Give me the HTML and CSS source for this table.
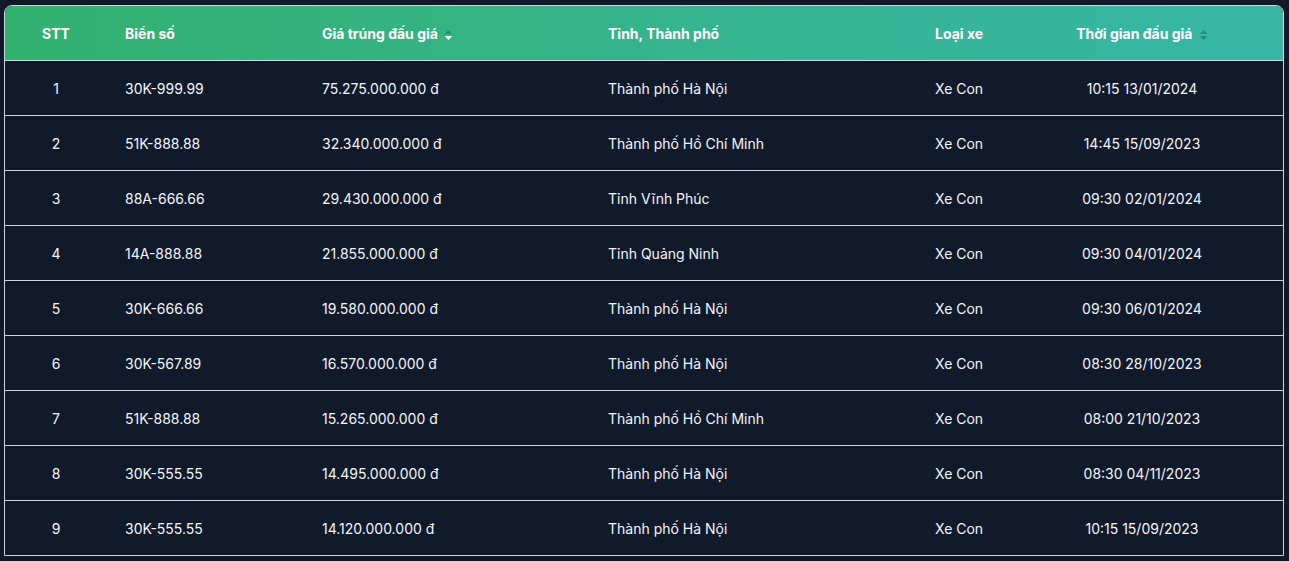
FILE: index.html
```html
<!DOCTYPE html>
<html lang="vi">

<head>
    <meta charset="UTF-8">
    <title>Biển số trúng đấu giá</title>
    <link rel="stylesheet" href="styles.css">
</head>

<body>
    <div class="wrap">
        <table class="plates">
            <colgroup>
                <col class="c-stt">
                <col class="c-plate">
                <col class="c-price">
                <col class="c-city">
                <col class="c-type">
                <col class="c-time">
            </colgroup>
            <thead>
                <tr>
                    <th class="center">STT</th>
                    <th>Biển số</th>
                    <th>Giá trúng đấu giá
                        <svg class="sort" width="9" height="12" viewBox="0 0 9 12">
                            <path d="M1 4.6 L4.5 1 L8 4.6 Q8.2 5 7.7 5 L1.3 5 Q0.8 5 1 4.6 Z" fill="#1f8a55" opacity="0.75"/>
                            <path d="M1 7.4 L4.5 11 L8 7.4 Q8.2 7 7.7 7 L1.3 7 Q0.8 7 1 7.4 Z" fill="#ffffff"/>
                        </svg>
                    </th>
                    <th>Tỉnh, Thành phố</th>
                    <th>Loại xe</th>
                    <th class="center">Thời gian đấu giá
                        <svg class="sort" width="9" height="12" viewBox="0 0 9 12">
                            <path d="M1 4.6 L4.5 1 L8 4.6 Q8.2 5 7.7 5 L1.3 5 Q0.8 5 1 4.6 Z" fill="#1e8a78" opacity="0.8"/>
                            <path d="M1 7.4 L4.5 11 L8 7.4 Q8.2 7 7.7 7 L1.3 7 Q0.8 7 1 7.4 Z" fill="#1e8a78" opacity="0.8"/>
                        </svg>
                    </th>
                </tr>
            </thead>
            <tbody id="rows"></tbody>
        </table>
    </div>

    <script>
        const rows = [
            ["30K-999.99", "75.275.000.000 đ", "Thành phố Hà Nội", "10:15 13/01/2024"],
            ["51K-888.88", "32.340.000.000 đ", "Thành phố Hồ Chí Minh", "14:45 15/09/2023"],
            ["88A-666.66", "29.430.000.000 đ", "Tỉnh Vĩnh Phúc", "09:30 02/01/2024"],
            ["14A-888.88", "21.855.000.000 đ", "Tỉnh Quảng Ninh", "09:30 04/01/2024"],
            ["30K-666.66", "19.580.000.000 đ", "Thành phố Hà Nội", "09:30 06/01/2024"],
            ["30K-567.89", "16.570.000.000 đ", "Thành phố Hà Nội", "08:30 28/10/2023"],
            ["51K-888.88", "15.265.000.000 đ", "Thành phố Hồ Chí Minh", "08:00 21/10/2023"],
            ["30K-555.55", "14.495.000.000 đ", "Thành phố Hà Nội", "08:30 04/11/2023"],
            ["30K-555.55", "14.120.000.000 đ", "Thành phố Hà Nội", "10:15 15/09/2023"]
        ];

        const tbody = document.getElementById("rows");
        rows.forEach((r, i) => {
            const tr = document.createElement("tr");
            tr.innerHTML = `
                <td class="center">${i + 1}</td>
                <td>${r[0]}</td>
                <td>${r[1]}</td>
                <td>${r[2]}</td>
                <td>Xe Con</td>
                <td class="center">${r[3]}</td>
            `;
            tbody.appendChild(tr);
        });
    </script>
</body>

</html>
```
FILE: styles.css
```css
body {
    margin: 0;
    background-color: #111827;
    font-family: Inter, "Noto Sans", sans-serif;
    color: #f1f5f9;
}

.wrap {
    padding: 5px 5px 0 4px;
}

.plates {
    width: 100%;
    table-layout: fixed;
    border-collapse: separate;
    border-spacing: 0;
    border: 1px solid #cbd5e1;
    border-radius: 8px 8px 0 0;
    overflow: hidden;
    font-size: 14px;
}

.c-stt { width: 102px; }
.c-plate { width: 197px; }
.c-price { width: 286px; }
.c-city { width: 327px; }
.c-type { width: 84px; }

th, td {
    height: 54px;
    padding: 0 18px;
    text-align: left;
    white-space: nowrap;
}

th {
    font-weight: 700;
    color: #ffffff;
}

thead tr {
    background: linear-gradient(90deg, #33b16f 0%, #35b48f 55%, #37b6a7 100%);
}

td {
    border-top: 1px solid #cbd5e1;
    background-color: #111a2b;
}

.center {
    text-align: center;
    padding: 0;
}

.sort {
    vertical-align: -2px;
    margin-left: 3px;
}
```
